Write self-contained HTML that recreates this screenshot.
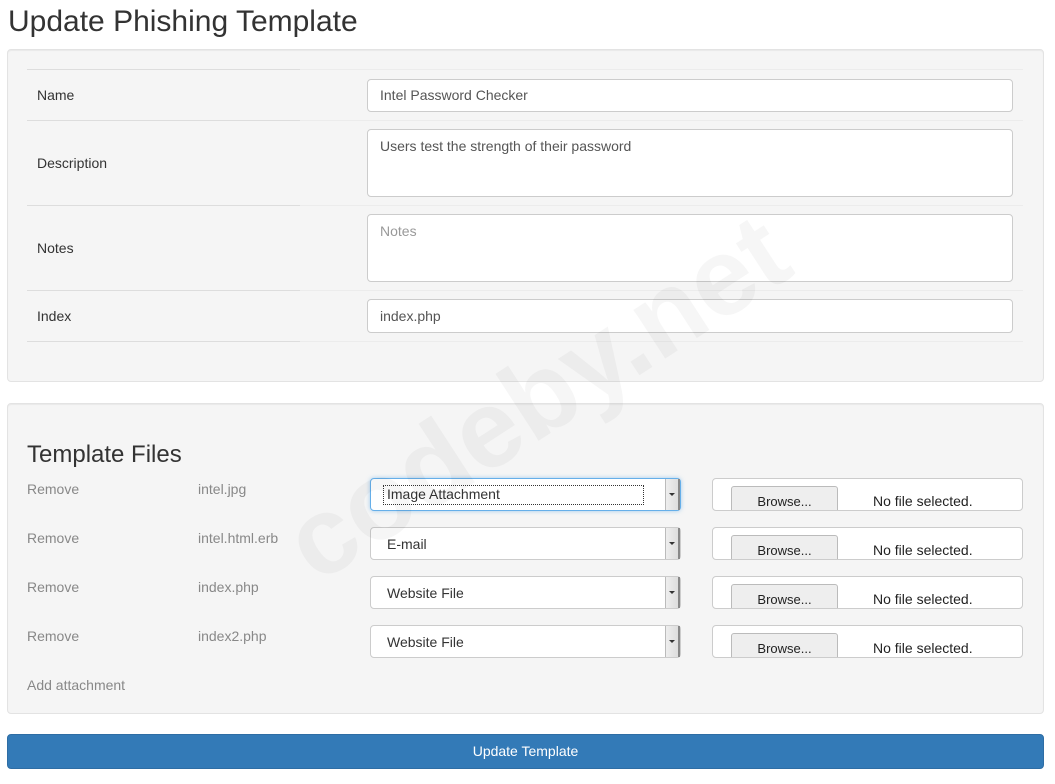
<!DOCTYPE html><html><head><style>
body{margin:0;width:1055px;height:784px;background:#fff;font-family:"Liberation Sans",sans-serif;font-size:14px;color:#333;position:relative;overflow:hidden}
.a{position:absolute}
.panel{position:absolute;left:7px;width:1035px;background:#f5f5f5;border:1px solid #e3e3e3;border-radius:4px;box-shadow:inset 0 1px 1px rgba(0,0,0,.05)}
.ln{position:absolute;left:27px;width:996px;height:1px;background:linear-gradient(90deg,#ddd 0,#ddd 273px,#ececec 273px)}
.lbl{position:absolute;left:37px;font-size:14px}
.inp{position:absolute;left:367px;width:646px;background:#fff;border:1px solid #ccc;border-radius:4px;box-sizing:border-box;padding:0 12px;font-size:14px;color:#555}
.g{color:#888;position:absolute;font-size:14px}
.sel{position:absolute;left:370px;width:311px;height:33px;background:#fff;border:1px solid #ccc;border-radius:4px;box-sizing:border-box;font-size:14px;color:#333}
.sel span{position:absolute;left:16px;top:8px}
.sel i{position:absolute;right:0;top:0;width:12px;height:31px;background:linear-gradient(90deg,#eee,#ddd);border-left:1px solid #bbb;border-right:2px solid #888}
.sel i:after{content:"";position:absolute;left:3px;top:14px;border:3px solid transparent;border-top:3px solid #333}
.file{position:absolute;left:712px;width:311px;height:33px;background:#fff;border:1px solid #ccc;border-radius:4px;box-sizing:border-box;overflow:hidden}
.file b{position:absolute;left:18px;top:7px;width:105px;height:30px;background:#eee;border:1px solid #bbb;border-radius:3px;font-weight:normal;font-size:13px;text-align:center;line-height:30px;color:#222}
.file span{position:absolute;left:160px;top:14px;font-size:14px;color:#222}
</style></head><body>
<div class="a" style="left:8px;top:5px;font-size:30px;color:#333">Update Phishing Template</div>
<div class="panel" style="top:49px;height:331px"></div>
<div class="ln" style="top:69px"></div><div class="ln" style="top:120px"></div><div class="ln" style="top:205px"></div><div class="ln" style="top:290px"></div><div class="ln" style="top:341px"></div>
<div class="lbl" style="top:87px">Name</div>
<div class="lbl" style="top:155px">Description</div>
<div class="lbl" style="top:240px">Notes</div>
<div class="lbl" style="top:308px">Index</div>
<div class="inp" style="top:79px;height:33px;line-height:31px">Intel Password Checker</div>
<div class="inp" style="top:129px;height:68px;padding-top:8px">Users test the strength of their password</div>
<div class="inp" style="top:214px;height:68px;padding-top:8px;color:#999">Notes</div>
<div class="inp" style="top:299px;height:34px;line-height:32px">index.php</div>
<div class="panel" style="top:403px;height:309px"></div>
<div class="a" style="left:27px;top:441px;font-size:24px;color:#333">Template Files</div>
<div class="g" style="left:27px;top:481px">Remove</div><div class="g" style="left:198px;top:481px">intel.jpg</div>
<div class="g" style="left:27px;top:530px">Remove</div><div class="g" style="left:198px;top:530px">intel.html.erb</div>
<div class="g" style="left:27px;top:579px">Remove</div><div class="g" style="left:198px;top:579px">index.php</div>
<div class="g" style="left:27px;top:628px">Remove</div><div class="g" style="left:198px;top:628px">index2.php</div>
<div class="g" style="left:27px;top:677px">Add attachment</div>
<div class="sel" style="top:478px;border-color:#66afe9;box-shadow:0 0 4px rgba(102,175,233,.6)"><span style="left:12px;top:6px;border:1px dotted #333;width:256px;height:18px;padding-left:3px">Image Attachment</span><i></i></div>
<div class="sel" style="top:527px"><span>E-mail</span><i></i></div>
<div class="sel" style="top:576px"><span>Website File</span><i></i></div>
<div class="sel" style="top:625px"><span>Website File</span><i></i></div>
<div class="file" style="top:478px"><b>Browse...</b><span>No file selected.</span></div>
<div class="file" style="top:527px"><b>Browse...</b><span>No file selected.</span></div>
<div class="file" style="top:576px"><b>Browse...</b><span>No file selected.</span></div>
<div class="file" style="top:625px"><b>Browse...</b><span>No file selected.</span></div>
<div class="a" style="left:7px;top:734px;width:1035px;height:33px;background:#337ab7;border:1px solid #2e6da4;border-radius:4px;color:#fff;text-align:center;line-height:33px;font-size:14px">Update Template</div>
<div class="a" style="left:262px;top:500px;font-size:110px;font-weight:bold;color:rgba(0,0,0,0.035);transform:rotate(-33deg);transform-origin:left top;white-space:nowrap">codeby.net</div>
</body></html>
